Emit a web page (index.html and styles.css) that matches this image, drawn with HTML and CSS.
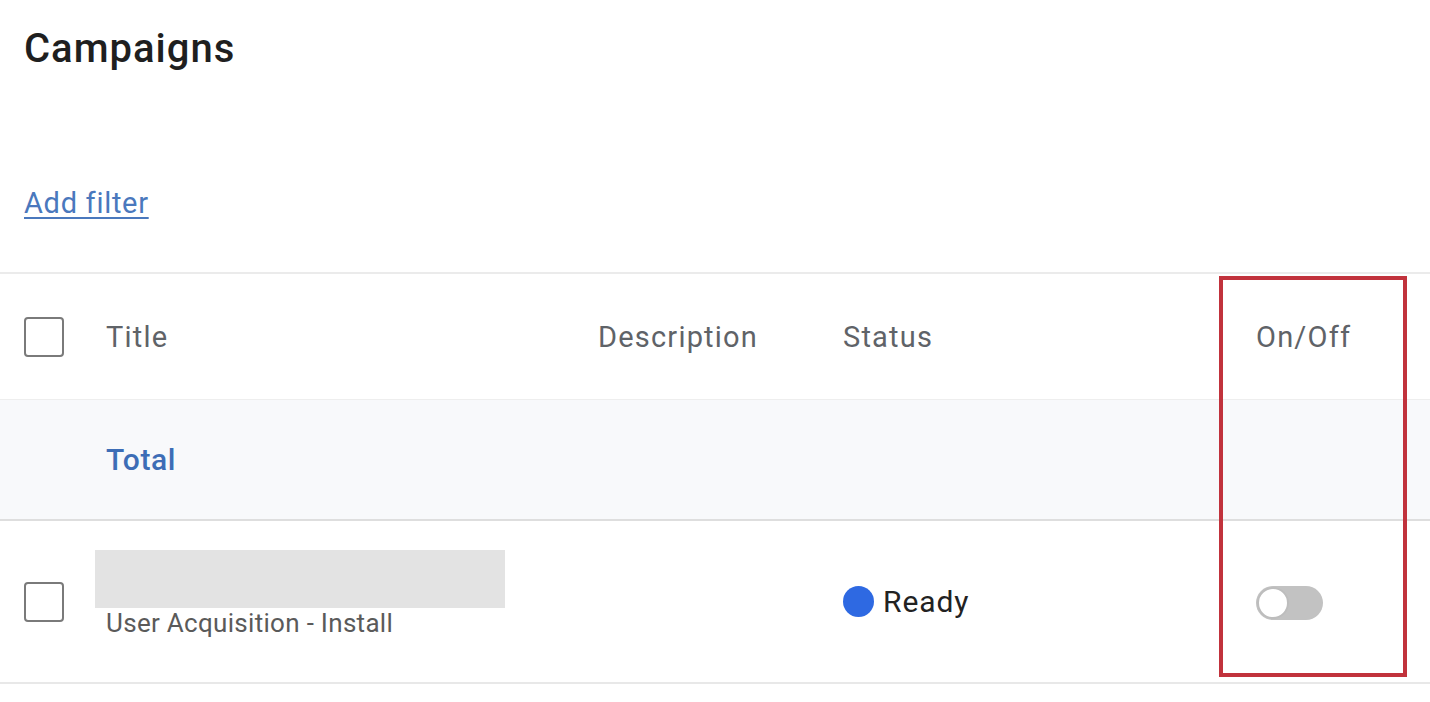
FILE: index.html
```html
<!DOCTYPE html>
<html lang="en">
<head>
<meta charset="utf-8">
<title>Campaigns</title>
<link rel="stylesheet" href="styles.css">
</head>
<body>
<main class="page">
  <h1 class="page-title">Campaigns</h1>
  <a class="add-filter" href="#">Add filter</a>
  <div class="table">
    <div class="row row-head">
      <div class="cell"><span class="checkbox"></span></div>
      <div class="cell">Title</div>
      <div class="cell">Description</div>
      <div class="cell">Status</div>
      <div class="cell">On/Off</div>
    </div>
    <div class="row row-total">
      <div class="cell"></div>
      <div class="cell total-label">Total</div>
      <div class="cell"></div>
      <div class="cell"></div>
      <div class="cell"></div>
    </div>
    <div class="row row-data">
      <div class="cell"><span class="checkbox"></span></div>
      <div class="cell title-cell">
        <div class="redacted"></div>
        <div class="subtitle">User Acquisition - Install</div>
      </div>
      <div class="cell"></div>
      <div class="cell status"><span class="dot"></span><span class="status-text">Ready</span></div>
      <div class="cell"><span class="toggle"><span class="knob"></span></span></div>
    </div>
    <div class="highlight"></div>
  </div>
</main>
</body>
</html>
```

FILE: styles.css
```css
* { box-sizing: border-box; }
html, body { margin: 0; padding: 0; background: #ffffff; }
body { font-family: Roboto, "Noto Sans", Arial, sans-serif; color: #202124; }

.page { padding-top: 25px; }

.page-title {
  margin: 0 0 0 24px;
  font-size: 40px;
  line-height: 48px;
  font-weight: 500;
  letter-spacing: 1px;
  color: #1f1f1f;
}

.add-filter {
  display: inline-block;
  margin: 113px 0 0 24px;
  font-size: 29px;
  line-height: 34px;
  letter-spacing: 0.7px;
  color: #4a78bd;
  text-decoration: underline;
  text-decoration-thickness: 2px;
  text-underline-offset: 4px;
}

.table {
  position: relative;
  margin-top: 52px;
  border-top: 2px solid #ebebeb;
}

.row {
  display: grid;
  grid-template-columns: 82px 492px 245px 413px 1fr;
  padding-left: 24px;
  align-items: center;
}

.cell { display: flex; align-items: center; }

.row-head {
  height: 126px;
  border-bottom: 1px solid #eeeeee;
  font-size: 29px;
  letter-spacing: 1.2px;
  color: #5f6368;
}

.row-total {
  height: 121px;
  background: #f8f9fb;
  border-bottom: 2px solid #dedede;
}

.total-label {
  font-size: 30px;
  font-weight: 500;
  letter-spacing: 0.6px;
  color: #3d6db6;
}

.row-data {
  height: 163px;
  border-bottom: 2px solid #e8e8e8;
}

.checkbox {
  display: block;
  width: 40px;
  height: 40px;
  border: 2px solid #7a7a7a;
  border-radius: 4px;
  background: #fff;
}

.title-cell {
  flex-direction: column;
  align-items: flex-start;
  padding-bottom: 15px;
}

.redacted {
  width: 410px;
  height: 58px;
  margin-left: -11px;
  background: #e3e3e3;
}

.subtitle {
  font-size: 26px;
  line-height: 30px;
  letter-spacing: 0.3px;
  color: #5a5a5a;
}

.status { gap: 9px; }

.dot {
  width: 31px;
  height: 31px;
  border-radius: 50%;
  background: #2e69e2;
}

.status-text {
  font-size: 30px;
  letter-spacing: 0.9px;
  color: #222222;
}

.toggle {
  position: relative;
  display: block;
  width: 67px;
  height: 34px;
  margin-top: 2px;
  border-radius: 17px;
  background: #c2c2c2;
}

.knob {
  position: absolute;
  left: 1px;
  top: 1px;
  width: 32px;
  height: 32px;
  border-radius: 50%;
  background: #ffffff;
  border: 2px solid #bdbdbd;
}

.highlight {
  position: absolute;
  top: 2px;
  right: 23px;
  width: 188px;
  height: 401px;
  border: 4px solid #c1323c;
}
```
